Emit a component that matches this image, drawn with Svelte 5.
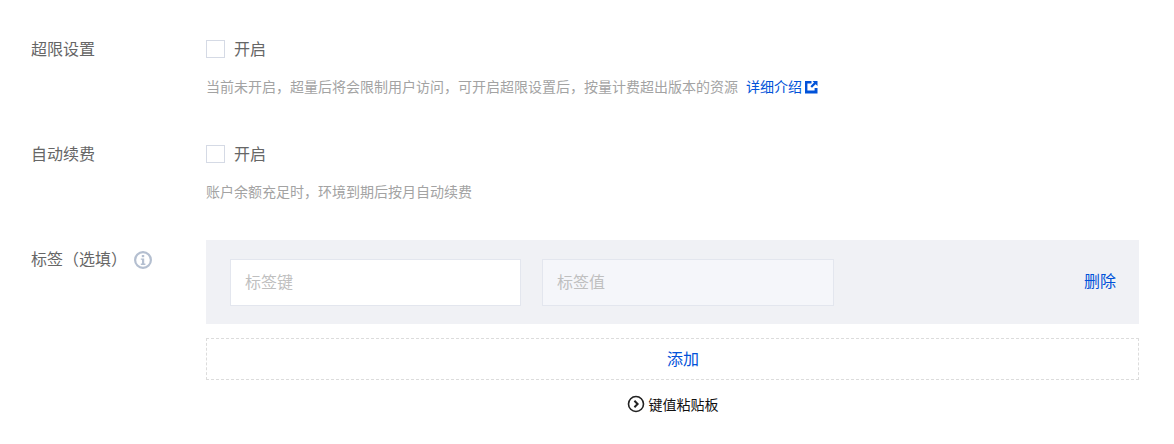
<script>
  const tagKeyPlaceholder = '标签键';
  const tagValuePlaceholder = '标签值';
</script>

<div class="form">
  <div class="row row-overage">
    <div class="label">超限设置</div>
    <div class="control">
      <label class="check"><input type="checkbox" /><span>开启</span></label>
      <p class="help">
        <span>当前未开启，超量后将会限制用户访问，可开启超限设置后，按量计费超出版本的资源</span>
        <a class="more" href="#more">详细介绍
          <svg width="14" height="14" viewBox="0 0 14 14" aria-hidden="true">
            <path d="M1 1h6.5v2.4H3.4v7.2h7.2V8H13.5v5.5H1z" fill="#0052d9" />
            <path d="M8.5 1h5v5l-1.9-1.8-3.6 3.6-1.6-1.6 3.6-3.6z" fill="#0052d9" />
          </svg>
        </a>
      </p>
    </div>
  </div>

  <div class="row row-renew">
    <div class="label">自动续费</div>
    <div class="control">
      <label class="check"><input type="checkbox" /><span>开启</span></label>
      <p class="help"><span>账户余额充足时，环境到期后按月自动续费</span></p>
    </div>
  </div>

  <div class="row">
    <div class="label tag-label">
      标签（选填）
      <svg class="info" width="18" height="18" viewBox="0 0 18 18" aria-hidden="true">
        <circle cx="9" cy="9" r="7.9" fill="none" stroke="#b4bfd0" stroke-width="2.2" />
        <rect x="7.8" y="4" width="2.4" height="2.2" fill="#b4bfd0" />
        <path d="M6.8 7.4h3.4v5.2h1.2V14H6.8v-1.4H8V8.8H6.8z" fill="#b4bfd0" />
      </svg>
    </div>
    <div class="control">
      <div class="tag-box">
        <input class="tag-input" placeholder={tagKeyPlaceholder} />
        <input class="tag-input value" placeholder={tagValuePlaceholder} disabled />
        <button class="link delete" type="button">删除</button>
      </div>
      <button class="add" type="button">添加</button>
      <div class="paste">
        <svg width="18" height="18" viewBox="0 0 18 18" aria-hidden="true">
          <circle cx="9" cy="9" r="7.5" fill="none" stroke="#222" stroke-width="1.6" />
          <path d="M7.4 5.8 10.6 9l-3.2 3.2" fill="none" stroke="#222" stroke-width="2" />
        </svg>
        <span>键值粘贴板</span>
      </div>
    </div>
  </div>
</div>

<style>
  :global(body) {
    margin: 0;
    background: #fff;
  }

  .form {
    box-sizing: border-box;
    width: 1174px;
    height: 444px;
    padding: 37px 35px 0 31px;
    font-family: "Noto Sans CJK SC", "Noto Sans", sans-serif;
    font-size: 16px;
    color: #666;
    overflow: hidden;
  }

  .row {
    display: flex;
  }

  .row-overage {
    height: 105px;
  }

  .row-renew {
    height: 98px;
  }

  .label {
    width: 175px;
    flex: none;
    line-height: 22px;
  }

  .tag-label {
    display: flex;
    align-items: flex-start;
    padding-top: 7px;
    gap: 7px;
  }

  .info {
    margin-top: 4px;
  }

  .control {
    flex: 1;
    min-width: 0;
  }

  .check {
    display: flex;
    align-items: center;
    gap: 9px;
    height: 24px;
  }

  .check span {
    margin-bottom: 2px;
  }

  .check input {
    appearance: none;
    box-sizing: border-box;
    width: 19px;
    height: 18px;
    margin: 0;
    background: #fff;
    border: 1px solid #d5dae5;
  }

  .help {
    margin: 14px 0 0;
    font-size: 14px;
    line-height: 22px;
    color: #a3a3a3;
    display: flex;
    align-items: center;
    gap: 8px;
  }

  .more {
    display: flex;
    align-items: center;
    gap: 2px;
    color: #0052d9;
    text-decoration: none;
  }

  .more svg {
    margin-top: 2px;
  }

  .tag-box {
    box-sizing: border-box;
    height: 84px;
    padding: 19px 23px 0 24px;
    background: #f0f1f5;
    display: flex;
    align-items: flex-start;
    gap: 21px;
  }

  .tag-input {
    box-sizing: border-box;
    width: 291px;
    height: 47px;
    padding: 0 14px 4px;
    border: 1px solid #e3e6ee;
    border-radius: 0;
    background: #fff;
    font: inherit;
    outline: none;
  }

  .tag-input.value {
    width: 292px;
  }

  .tag-input:disabled {
    background: #f5f6fa;
  }

  .tag-input::placeholder {
    color: #bfbfbf;
    opacity: 1;
  }

  .link {
    padding: 0;
    border: 0;
    background: none;
    font: inherit;
    color: #0052d9;
  }

  .delete {
    margin-left: auto;
    height: 42px;
    line-height: 42px;
  }

  .add {
    display: block;
    box-sizing: border-box;
    width: 100%;
    height: 42px;
    margin-top: 14px;
    padding: 0 0 2px 21px;
    background: #fff;
    border: 1px dashed #dcdcdc;
    font: inherit;
    color: #0052d9;
  }

  .paste {
    display: flex;
    justify-content: center;
    align-items: center;
    gap: 4px;
    margin-top: 12px;
    height: 24px;
    font-size: 14px;
    color: #111;
  }
</style>
